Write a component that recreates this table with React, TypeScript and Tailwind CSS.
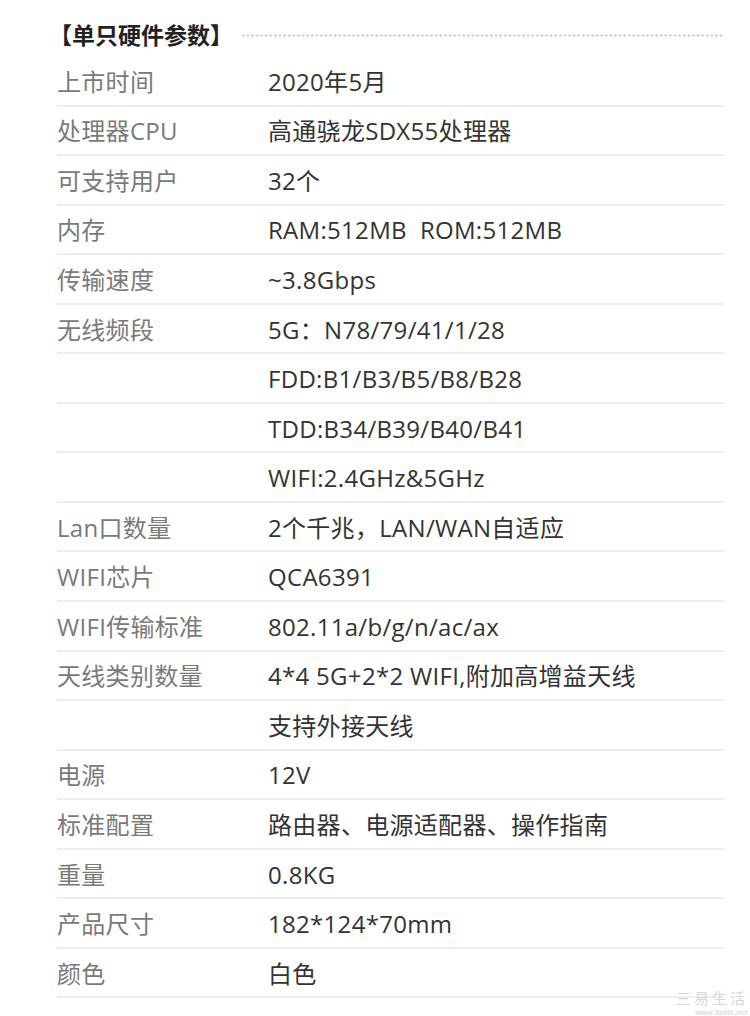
const rows: [string, string][] = [
  ["上市时间", "2020年5月"],
  ["处理器CPU", "高通骁龙SDX55处理器"],
  ["可支持用户", "32个"],
  ["内存", "RAM:512MB  ROM:512MB"],
  ["传输速度", "~3.8Gbps"],
  ["无线频段", "5G：N78/79/41/1/28"],
  ["", "FDD:B1/B3/B5/B8/B28"],
  ["", "TDD:B34/B39/B40/B41"],
  ["", "WIFI:2.4GHz&5GHz"],
  ["Lan口数量", "2个千兆，LAN/WAN自适应"],
  ["WIFI芯片", "QCA6391"],
  ["WIFI传输标准", "802.11a/b/g/n/ac/ax"],
  ["天线类别数量", "4*4 5G+2*2 WIFI,附加高增益天线"],
  ["", "支持外接天线"],
  ["电源", "12V"],
  ["标准配置", "路由器、电源适配器、操作指南"],
  ["重量", "0.8KG"],
  ["产品尺寸", "182*124*70mm"],
  ["颜色", "白色"],
];

export default function App() {
  return (
    <div
      className="relative w-[750px] h-[1016px] bg-white overflow-hidden"
      style={{ fontFamily: '"Open Sans", "Noto Sans CJK SC", sans-serif' }}
    >
      <div className="pl-[57px] pr-[26px] pt-[19px]">
        <div className="flex items-center h-[30px] gap-[8px]">
          <h2
            className="text-[23px] font-bold text-[#222] leading-none whitespace-pre -ml-[8px]"
            style={{ fontFamily: '"Noto Sans CJK SC", sans-serif' }}
          >
            【单只硬件参数】
          </h2>
          <div className="flex-1 h-[3px] mt-[2px] bg-[radial-gradient(circle,#c4c4c4_0.9px,transparent_1.3px)] bg-[length:4.6px_3px]" />
        </div>

        <div className="mt-[8px]">
          {rows.map(([label, value], i) => (
            <div key={i} className="flex items-center h-[49.55px] border-b-[2px] border-[#eeeeee] whitespace-pre">
              <div className="w-[211px] text-[24px] text-[#7a7a7a] tracking-[0.3px] pt-[2px]">{label}</div>
              <div className="text-[24px] text-[#333] tracking-[0.3px] pt-[2px]">{value}</div>
            </div>
          ))}
        </div>
      </div>

      <div className="absolute right-[2px] bottom-0 flex flex-col items-end gap-[4px] opacity-60">
        <span className="text-[15px] leading-[15px] tracking-[3px] text-[#bdbdbd]" style={{ fontFamily: '"Noto Sans CJK SC", sans-serif' }}>三易生活</span>
        <span className="text-[7px] leading-[7px] font-bold text-[#c8c8c8]">www.3elife.net</span>
      </div>
    </div>
  );
}
